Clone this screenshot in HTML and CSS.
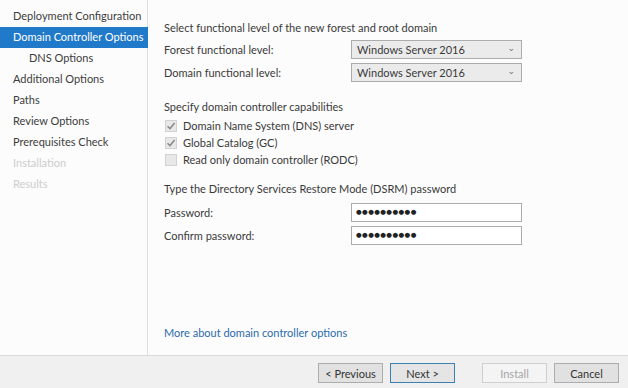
FILE: index.html
```html
<!DOCTYPE html>
<html>
<head>
<meta charset="utf-8">
<link rel="stylesheet" href="styles.css">
</head>
<body>
<div class="window">
  <div class="top">
    <nav class="sidebar">
      <div class="nav-item">Deployment Configuration</div>
      <div class="nav-item active">Domain Controller Options</div>
      <div class="nav-item sub">DNS Options</div>
      <div class="nav-item">Additional Options</div>
      <div class="nav-item">Paths</div>
      <div class="nav-item">Review Options</div>
      <div class="nav-item">Prerequisites Check</div>
      <div class="nav-item disabled">Installation</div>
      <div class="nav-item disabled">Results</div>
    </nav>
    <main class="content">
      <div class="heading">Select functional level of the new forest and root domain</div>
      <div class="row">
        <span class="label">Forest functional level:</span>
        <div class="select"><span>Windows Server 2016</span><span class="caret">&#8964;</span></div>
      </div>
      <div class="row">
        <span class="label">Domain functional level:</span>
        <div class="select"><span>Windows Server 2016</span><span class="caret">&#8964;</span></div>
      </div>
      <div class="heading sec">Specify domain controller capabilities</div>
      <div class="check"><span class="box checked"><svg width="10" height="10" viewBox="0 0 10 10"><path d="M1.5 5.2 L4 7.6 L8.6 2" fill="none" stroke="#8a8a8a" stroke-width="1.5"/></svg></span>Domain Name System (DNS) server</div>
      <div class="check"><span class="box checked"><svg width="10" height="10" viewBox="0 0 10 10"><path d="M1.5 5.2 L4 7.6 L8.6 2" fill="none" stroke="#8a8a8a" stroke-width="1.5"/></svg></span>Global Catalog (GC)</div>
      <div class="check"><span class="box"></span>Read only domain controller (RODC)</div>
      <div class="heading sec2">Type the Directory Services Restore Mode (DSRM) password</div>
      <div class="row">
        <span class="label">Password:</span>
        <div class="input">&#9679;&#9679;&#9679;&#9679;&#9679;&#9679;&#9679;&#9679;&#9679;&#9679;</div>
      </div>
      <div class="row">
        <span class="label">Confirm password:</span>
        <div class="input">&#9679;&#9679;&#9679;&#9679;&#9679;&#9679;&#9679;&#9679;&#9679;&#9679;</div>
      </div>
      <div class="spacer"></div>
      <a class="link">More about domain controller options</a>
    </main>
  </div>
  <footer class="footer">
    <button class="btn">&lt; Previous</button>
    <button class="btn primary">Next &gt;</button>
    <button class="btn off gapl">Install</button>
    <button class="btn">Cancel</button>
  </footer>
</div>
</body>
</html>
```
FILE: styles.css
```css
* { box-sizing: border-box; }
html, body { margin: 0; padding: 0; }
body {
  width: 628px;
  height: 388px;
  overflow: hidden;
  font-family: "Lato", "Open Sans", sans-serif;
  font-size: 11px;
  color: #3a3a3a;
  background: #fcfcfc;
}
.window { display: flex; flex-direction: column; height: 388px; }
.top { display: flex; flex: 1; }
.sidebar {
  width: 148px;
  border-right: 1px solid #dedede;
  padding-top: 6px;
}
.nav-item {
  height: 21px;
  line-height: 20px;
  padding-left: 13px;
  white-space: nowrap;
  color: #3c3c3c;
}
.nav-item.active { background: #2179c9; color: #fff; margin-right: -1px; }
.nav-item.sub { padding-left: 29px; }
.nav-item.disabled { color: #cdcdcd; }
.content {
  flex: 1;
  padding: 19px 0 0 16px;
  display: flex;
  flex-direction: column;
}
.heading { height: 17px; line-height: 17px; margin-bottom: 4px; }
.heading.sec { margin-top: 12px; margin-bottom: 2px; }
.heading.sec2 { margin-top: 12px; margin-bottom: 6px; }
.row { display: flex; align-items: center; height: 19px; margin-bottom: 4px; }
.label { width: 187px; }
.select {
  width: 171px; height: 19px;
  background: #ebebeb;
  border: 1px solid #acacac;
  display: flex; align-items: center; justify-content: space-between;
  padding: 0 6px 0 5px;
}
.caret { font-size: 9px; color: #707070; line-height: 8px; margin-top: -4px; font-family: "DejaVu Sans", sans-serif; }
.check { display: flex; align-items: center; height: 17px; }
.box {
  width: 12px; height: 12px;
  border: 1px solid #d2d2d2;
  background: #e8e8e8;
  margin: 0 6px 0 1px;
  display: flex; align-items: center; justify-content: center;
}
.input {
  width: 171px; height: 19px;
  background: #fff;
  border: 1px solid #acacac;
  padding-left: 4px;
  font-family: "DejaVu Sans", sans-serif;
  font-size: 6.5px;
  letter-spacing: 0.4px;
  color: #222;
  line-height: 17px;
}
.spacer { flex: 1; }
.link { color: #2b6aad; margin-bottom: 14px; line-height: 17px; cursor: pointer; }
.footer {
  height: 33px;
  border-top: 1px solid #dadada;
  background: #f0f0f0;
  display: flex; align-items: center; justify-content: flex-end;
  padding: 0 9px 0 0;
  gap: 7px;
}
.btn {
  width: 65px; height: 20px;
  font: inherit;
  color: #333;
  background: #e1e1e1;
  border: 1px solid #adadad;
  padding: 0;
  margin-top: 2px;
}
.btn.primary { border-color: #3c7fb1; background: #e5e5e5; }
.btn.off { background: #f4f4f4; border-color: #cfcfcf; color: #a5a5a5; }
.btn.gapl { margin-left: 20px; }
```
